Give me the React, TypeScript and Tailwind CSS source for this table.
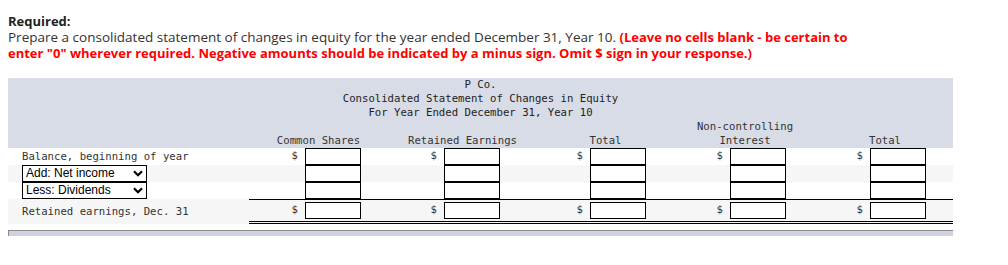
import React from "react";

const mono = { fontFamily: '"DejaVu Sans Mono", "Liberation Mono", monospace' };
const sans = { fontFamily: '"Open Sans", Lato, sans-serif' };
const arial = { fontFamily: '"Liberation Sans", Arial, sans-serif' };

const cols = [
  { w: "w-[112px]", hw: "w-[85px]", head: ["Common Shares"] },
  { w: "w-[139px]", hw: "w-[75px]", head: ["Retained Earnings"] },
  { w: "w-[146px]", hw: "w-[81px]", head: ["Total"] },
  { w: "w-[140px]", hw: "w-[82px]", head: ["Non-controlling", "Interest"] },
  { w: "w-[140px]", hw: "w-[82px]", head: ["Total"] },
];

function Box() {
  return (
    <input
      type="text"
      aria-label="amount"
      className="ml-[7px] box-border h-[17px] w-[56px] border border-black bg-white outline-none"
    />
  );
}

function Cells({ dollar }: { dollar: boolean }) {
  return (
    <>
      {cols.map((c, i) => (
        <div key={i} className={`${c.w} flex h-full items-center justify-end`}>
          {dollar && <span className="leading-none">$</span>}
          <Box />
        </div>
      ))}
      <div className="w-[27px]" />
    </>
  );
}

function Select({ label }: { label: string }) {
  return (
    <div className="relative ml-[14px] h-[17px] w-[125px]">
      <select
        className="box-border h-[17px] w-[125px] appearance-none border border-black bg-white pl-[3px] text-[12px] leading-[15px] text-black outline-none"
        style={arial}
        defaultValue={label}
      >
        <option>{label}</option>
      </select>
      <svg
        className="pointer-events-none absolute right-[4px] top-[5px]"
        width="10"
        height="7"
        viewBox="0 0 10 7"
      >
        <path d="M1 1.2 L5 5.2 L9 1.2" fill="none" stroke="#000" strokeWidth="2.2" />
      </svg>
    </div>
  );
}

export default function App() {
  return (
    <div className="h-[265px] w-[1008px] bg-white">
      <div className="px-2 pt-[13px] text-[13.5px] leading-[16px] text-[#333]" style={sans}>
        <div className="text-[13px] font-bold text-[#222]">Required:</div>
        <div>
          Prepare a consolidated statement of changes in equity for the year ended December 31, Year 10.{" "}
          <span className="text-[13px] font-bold text-[#ff0000]">
            (Leave no cells blank - be certain to
            <br />
            enter "0" wherever required. Negative amounts should be indicated by a minus sign. Omit $ sign in
            your response.)
          </span>
        </div>
      </div>

      <div className="ml-2 mt-[17px] w-[945px] text-[10.65px] text-[#333]" style={mono}>
        {/* header */}
        <div className="h-[70px] bg-[#d8dce6] leading-[14px]">
          <div className="text-center text-[#222]">
            <div>P Co.</div>
            <div>Consolidated Statement of Changes in Equity</div>
            <div>For Year Ended December 31, Year 10</div>
          </div>
          <div className="flex h-[28px] items-end">
            <div className="w-[241px]" />
            {cols.map((c, i) => (
              <div key={i} className={`${c.w} flex justify-end`}>
                <div className={`${c.hw} flex flex-col items-center whitespace-nowrap`}>
                  {c.head.map((h) => (
                    <div key={h}>{h}</div>
                  ))}
                </div>
              </div>
            ))}
            <div className="w-[27px]" />
          </div>
        </div>

        {/* row 1 */}
        <div className="flex h-[17px] items-center bg-white">
          <div className="w-[241px] pl-[14px]">Balance, beginning of year</div>
          <Cells dollar />
        </div>
        {/* row 2 */}
        <div className="flex h-[17px] items-center bg-[#f6f6f6]">
          <div className="w-[241px]">
            <Select label="Add: Net income" />
          </div>
          <Cells dollar={false} />
        </div>
        {/* row 3 */}
        <div className="flex h-[17px] items-center bg-white">
          <div className="w-[241px]">
            <Select label="Less: Dividends" />
          </div>
          <Cells dollar={false} />
        </div>
        {/* row 4 */}
        <div className="flex h-[25px] bg-[#f6f6f6]">
          <div className="flex w-[241px] items-center pl-[14px] pt-[1px]">Retained earnings, Dec. 31</div>
          <div className="flex h-[25px] items-center border-b-[3px] border-t border-double border-b-black border-t-black border-t-solid">
            <Cells dollar />
          </div>
        </div>

        {/* bottom bar */}
        <div className="mt-[6px] h-[6px] border-l border-t border-[#8a8a8a] bg-[#cdd3e0]" />
      </div>
    </div>
  );
}
